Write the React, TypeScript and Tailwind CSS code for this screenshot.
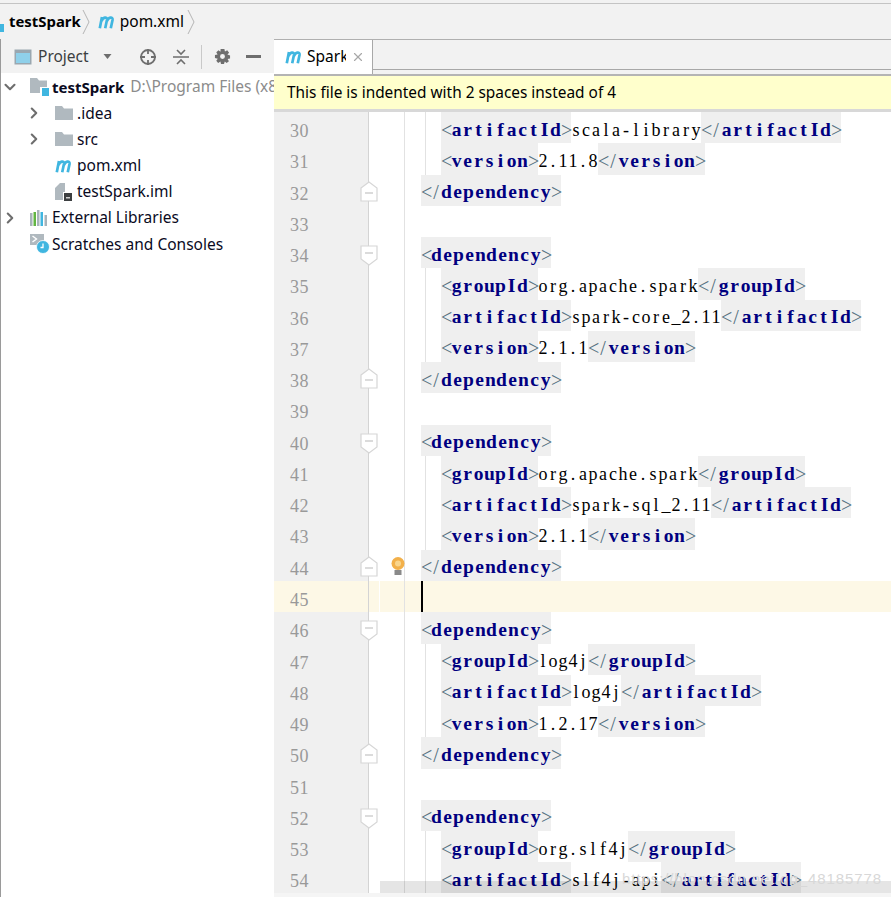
import React from "react";
import { ChevronDown, ChevronRight, X } from "lucide-react";

const uiFont = "font-['Noto_Sans',sans-serif]";

function Mono({ text, className }: { text: string; className?: string }) {
  return (
    <>
      {text.split("").map((c, i) => (
        <span key={i} className={`inline-block text-center ${className || "w-[10px]"}`}>
          {c}
        </span>
      ))}
    </>
  );
}

function Tag({ name, close }: { name: string; close?: boolean }) {
  return (
    <span className="inline-flex h-full items-center bg-[#efefef] pt-[4px]">
      <Mono text={close ? "</" : "<"} className="w-[10px] text-[20px] font-normal text-[#55707f]" />
      <Mono text={name} className="w-[11px] text-[19.5px] font-bold text-[#000080]" />
      <Mono text=">" className="w-[10px] text-[20px] font-normal text-[#55707f]" />
    </span>
  );
}

function MavenIcon({ className }: { className?: string }) {
  return (
    <svg viewBox="0 0 20 14" className={className} fill="none" stroke="#40b6e0" strokeWidth="3">
      <path d="M2 14 L4.4 1.5 M4 6 C5.5 1.5 10.4 0.6 10 4.5 L8 14 M10 6 C11.5 1.5 16.6 0.6 16.2 4.5 L14.2 14" />
    </svg>
  );
}

function FolderIcon() {
  return (
    <svg viewBox="0 0 18 14" className="h-[14px] w-[18px]">
      <path d="M0 0 H7 L9 2.5 H18 V14 H0 Z" fill="#b0b9bf" />
    </svg>
  );
}

function ModuleIcon() {
  return (
    <svg viewBox="0 0 19 18" className="h-[18px] w-[19px]">
      <path d="M0 0 H7 L9 2.5 H17 V9 H10 V15 H0 Z" fill="#b0b9bf" />
      <rect x="12" y="10" width="7" height="8" fill="#40b6e0" />
    </svg>
  );
}

function ImlIcon() {
  return (
    <svg viewBox="0 0 17 18" className="h-[18px] w-[17px]">
      <path d="M5 0 H10 V9 H8 V17 H0 V5 Z" fill="#b0b9bf" />
      <rect x="9" y="10" width="8" height="8" fill="#3c3f41" />
      <rect x="11" y="14" width="4" height="1.5" fill="#d0d0d0" />
    </svg>
  );
}

function LibIcon() {
  return (
    <svg viewBox="0 0 18 16" className="h-4 w-[18px]">
      <rect x="0" y="3" width="2.5" height="13" fill="#a8b3ba" />
      <rect x="3.5" y="2" width="2.5" height="14" fill="#62b543" />
      <rect x="7" y="0" width="2.5" height="16" fill="#a8b3ba" />
      <rect x="10.5" y="2" width="2.5" height="14" fill="#40b6e0" />
      <rect x="14.5" y="5" width="2.5" height="11" fill="#a8b3ba" />
    </svg>
  );
}

function ScratchIcon() {
  return (
    <svg viewBox="0 0 20 20" className="h-5 w-5">
      <rect x="0" y="0" width="14" height="11" fill="#b0b9bf" />
      <path d="M2.5 2 L6.5 5 L2.5 8" fill="none" stroke="#fff" strokeWidth="1.4" />
      <circle cx="13" cy="13" r="6.5" fill="#40b6e0" stroke="#fff" strokeWidth="0.8" />
      <path d="M13 9.5 V13.5 H10.5" fill="none" stroke="#fff" strokeWidth="1.3" />
    </svg>
  );
}

function TreeRow({
  pad,
  arrow,
  icon,
  children,
}: {
  pad: number;
  arrow?: "open" | "closed";
  icon: React.ReactNode;
  children: React.ReactNode;
}) {
  return (
    <div className="flex h-[26.2px] items-center whitespace-nowrap">
      <div className={pad === 0 ? "flex w-[29px] shrink-0 items-center" : "flex w-[54px] shrink-0 items-center justify-start pl-[24px]"}>
        {arrow === "open" && <ChevronDown size={18} strokeWidth={2.8} className="text-[#6e6e6e]" />}
        {arrow === "closed" && <ChevronRight size={18} strokeWidth={2.8} className="text-[#6e6e6e]" />}
      </div>
      <div className="flex w-[22px] shrink-0 items-center">{icon}</div>
      {children}
    </div>
  );
}

function FoldMark({ up }: { up?: boolean }) {
  return (
    <svg viewBox="0 0 18 21" className={up ? "absolute right-[-10px] top-[6px] z-10 h-[21px] w-[18px]" : "absolute right-[-10px] top-[8px] z-10 h-[21px] w-[18px]"}>
      <path
        d={up ? "M1 7 L9 1 L17 7 V20 H1 Z" : "M1 1 H17 V14 L9 20 L1 14 Z"}
        fill="#fff"
        stroke="#d6d6d6"
        strokeWidth="1.2"
      />
      <path d={up ? "M5 12 H13" : "M5 8 H13"} stroke="#c4c4c4" strokeWidth="1.2" />
    </svg>
  );
}

type Line = { no: number; indent?: number; tag?: string; value?: string; kind?: "open" | "close"; fold?: "start" | "end" };

const dep = (start: number, items: [string, string][]): Line[] => {
  const rows: Line[] = [{ no: start, indent: 1, tag: "dependency", kind: "open", fold: "start" }];
  items.forEach((it, i) => rows.push({ no: start + 1 + i, indent: 2, tag: it[0], value: it[1] }));
  rows.push({ no: start + 1 + items.length, indent: 1, tag: "dependency", kind: "close", fold: "end" });
  rows.push({ no: start + 2 + items.length });
  return rows;
};

const lines: Line[] = [
  { no: 30, indent: 2, tag: "artifactId", value: "scala-library" },
  { no: 31, indent: 2, tag: "version", value: "2.11.8" },
  { no: 32, indent: 1, tag: "dependency", kind: "close", fold: "end" },
  { no: 33 },
  ...dep(34, [["groupId", "org.apache.spark"], ["artifactId", "spark-core_2.11"], ["version", "2.1.1"]]),
  ...dep(40, [["groupId", "org.apache.spark"], ["artifactId", "spark-sql_2.11"], ["version", "2.1.1"]]),
  ...dep(46, [["groupId", "log4j"], ["artifactId", "log4j"], ["version", "1.2.17"]]),
  { no: 52, indent: 1, tag: "dependency", kind: "open", fold: "start" },
  { no: 53, indent: 2, tag: "groupId", value: "org.slf4j" },
  { no: 54, indent: 2, tag: "artifactId", value: "slf4j-api" },
];

function CodeRow({ line }: { line: Line }) {
  const current = line.no === 45;
  return (
    <div className={`flex h-[31.27px] shrink-0 ${current ? "bg-[#fdf8e6]" : ""}`}>
      <div className={`relative w-[95px] shrink-0 border-r border-[#d4d4d4] pl-[16px] pt-[7px] font-['Liberation_Serif',serif] text-[18px] leading-[24px] tracking-[0.5px] text-[#999999] ${current ? "" : "bg-[#f0f0f0]"}`}>
        {line.no}
        {line.fold === "start" && <FoldMark />}
        {line.fold === "end" && <FoldMark up />}
      </div>
      <div className={`relative w-[36px] shrink-0 border-r border-[#e2e2e2] ${current ? "" : "bg-white"}`}>
        {current && <div className="ml-[10px] h-full w-px bg-white" />}
        {line.no === 44 && (
          <svg viewBox="0 0 14 20" className="absolute left-[22px] top-[7px] h-[20px] w-[14px]">
            <circle cx="7" cy="6.5" r="6.5" fill="#f2b04a" />
            <circle cx="7" cy="6.5" r="3" fill="#f9d58c" />
            <rect x="3.5" y="13" width="7" height="5" fill="#8a8a8a" />
          </svg>
        )}
      </div>
      <div className="w-[16px] shrink-0" />
      <div className="flex h-full flex-1 items-stretch whitespace-nowrap font-['Liberation_Serif',serif] text-[18px] leading-[24px] text-black">
        {current && <div className="h-full w-[2px] bg-black" />}
        {line.indent === 2 && <div className="ml-[4px] w-[16px] shrink-0 border-l border-[#e2e2e2]" />}
        {line.tag && line.value ? (
          <>
            <Tag name={line.tag} />
            <span className="inline-flex items-center pt-[4px]">
              <Mono text={line.value} />
            </span>
            <Tag name={line.tag} close />
          </>
        ) : line.tag ? (
          <Tag name={line.tag} close={line.kind === "close"} />
        ) : null}
      </div>
    </div>
  );
}

export default function App() {
  return (
    <div className={`relative flex h-[897px] w-[891px] flex-col overflow-hidden bg-[#f2f2f2] ${uiFont}`}>
      {/* breadcrumb */}
      <div className="mt-[3px] flex h-[36px] shrink-0 items-center border-t border-[#c4c4c4] text-[15.5px] text-black">
        <div className="h-[8px] w-[4px] translate-y-[6px] bg-[#40b6e0]" />
        <span className="ml-[5px] text-[14.9px] font-bold">testSpark</span>
        <svg viewBox="0 0 8 26" className="ml-[1px] h-[26px] w-[8px]">
          <path d="M1 1 L7 13 L1 25" fill="none" stroke="#b5b5b5" />
        </svg>
        <MavenIcon className="ml-[8px] h-[14px] w-[18px]" />
        <span className="ml-[4px]">pom.xml</span>
        <svg viewBox="0 0 8 26" className="ml-[3px] h-[26px] w-[8px]">
          <path d="M1 1 L7 13 L1 25" fill="none" stroke="#b5b5b5" />
        </svg>
      </div>

      <div className="flex min-h-0 flex-1">
        {/* project panel */}
        <div className="flex w-[274px] shrink-0 flex-col overflow-hidden border-l border-[#9a9a9a] bg-white">
          <div className="flex h-[34px] shrink-0 items-center bg-[#f2f2f2] pt-[1px] text-[#3c3f41]">
            <svg viewBox="0 0 18 16" className="ml-[13px] h-[16px] w-[18px]">
              <rect x="0.5" y="0.5" width="17" height="15" fill="#9aa7b0" />
              <rect x="2" y="4" width="14" height="10" fill="#8fd0ea" />
            </svg>
            <span className="ml-[6px] text-[15.5px]">Project</span>
            <svg viewBox="0 0 8 5" className="ml-[14px] h-[5px] w-[9px]">
              <path d="M0 0 H8 L4 5 Z" fill="#6e6e6e" />
            </svg>
            <svg viewBox="0 0 18 18" className="ml-[27px] h-[18px] w-[18px]" fill="none" stroke="#6e6e6e" strokeWidth="1.8">
              <circle cx="9" cy="9" r="7" />
              <path d="M9 1 V6 M9 12 V17 M1 9 H6 M12 9 H17" />
            </svg>
            <svg viewBox="0 0 18 18" className="ml-[15px] h-[18px] w-[18px]" fill="none" stroke="#6e6e6e" strokeWidth="1.6">
              <path d="M1 9 H17 M5 2 L9 6 L13 2 M5 16 L9 12 L13 16" />
            </svg>
            <div className="ml-[11px] h-[24px] w-px bg-[#c9c9c9]" />
            <svg viewBox="0 0 18 18" className="ml-[12px] h-[17px] w-[17px]" fill="#6e6e6e">
              <path d="M7 1 H11 L11.6 3.6 L14 2.4 L16 5 L14.2 7 L17 8 V11 L14.4 11.6 L15.8 14 L13.4 16 L11.4 14.4 L10.6 17 H7.4 L6.8 14.4 L4.4 15.8 L2.4 13.4 L4 11.4 L1 10.6 V7.4 L3.8 6.8 L2.4 4.4 L4.8 2.4 L6.8 4 Z M9 6.4 A2.6 2.6 0 1 0 9 11.6 A2.6 2.6 0 1 0 9 6.4 Z" fillRule="evenodd" />
            </svg>
            <div className="ml-[15px] h-[3px] w-[15px] bg-[#6e6e6e]" />
          </div>
          <div className="pt-[1px] text-[15.5px] text-[#0a0a1e]">
            <TreeRow pad={0} arrow="open" icon={<ModuleIcon />}>
              <span className="text-[15px] font-bold">testSpark</span>
              <span className="ml-[6px] text-[#8c8c8c]">D:\Program Files (x86)</span>
            </TreeRow>
            <TreeRow pad={1} arrow="closed" icon={<FolderIcon />}>.idea</TreeRow>
            <TreeRow pad={1} arrow="closed" icon={<FolderIcon />}>src</TreeRow>
            <TreeRow pad={1} icon={<MavenIcon className="h-[14px] w-[18px]" />}>pom.xml</TreeRow>
            <TreeRow pad={1} icon={<ImlIcon />}>testSpark.iml</TreeRow>
            <TreeRow pad={0} arrow="closed" icon={<LibIcon />}>External Libraries</TreeRow>
            <TreeRow pad={0} icon={<ScratchIcon />}>Scratches and Consoles</TreeRow>
          </div>
        </div>

        {/* editor */}
        <div className="flex min-w-0 flex-1 flex-col border-t border-[#b0b0b0]">
          <div className="flex h-[36px] shrink-0 border-b-2 border-[#b4b4b4]">
            <div className="flex w-[99px] shrink-0 items-center border-r border-[#a8a8a8] bg-white pl-[11px] text-[15.5px] text-black">
              <MavenIcon className="h-[14px] w-[18px]" />
              <span className="ml-[4px] w-[39px] overflow-hidden">Spark</span>
              <X size={14} className="ml-[5px] text-[#a8a8a8]" />
            </div>
            <div className="mb-[4px] flex-1 border-b border-[#a8a8a8]" />
          </div>
          <div className="flex h-[33px] shrink-0 items-center bg-[#ffffcc] pl-[13px] text-[15.4px] text-black">
            This file is indented with 2 spaces instead of 4
          </div>
          <div className="h-[3px] shrink-0 bg-[#d8d8d8]" />
          <div className="flex min-h-0 flex-1 flex-col overflow-hidden bg-white">
            {lines.map((l) => (
              <CodeRow key={l.no} line={l} />
            ))}
          </div>
        </div>
      </div>

      {/* scrollbar and watermark sit over the editor */}
      <div className="absolute bottom-[4px] left-[380px] right-0 h-[12px] bg-black/10" />
      <div className="absolute bottom-0 left-[274px] right-0 h-[4px] bg-[#f5f5f5]" />
      <div className="absolute bottom-[9px] right-[9px] font-['Liberation_Sans',sans-serif] text-[15px] leading-[18px] tracking-[0.9px] text-[#d8d8d8]">
        https://blog.csdn.net/qq_48185778
      </div>
    </div>
  );
}
